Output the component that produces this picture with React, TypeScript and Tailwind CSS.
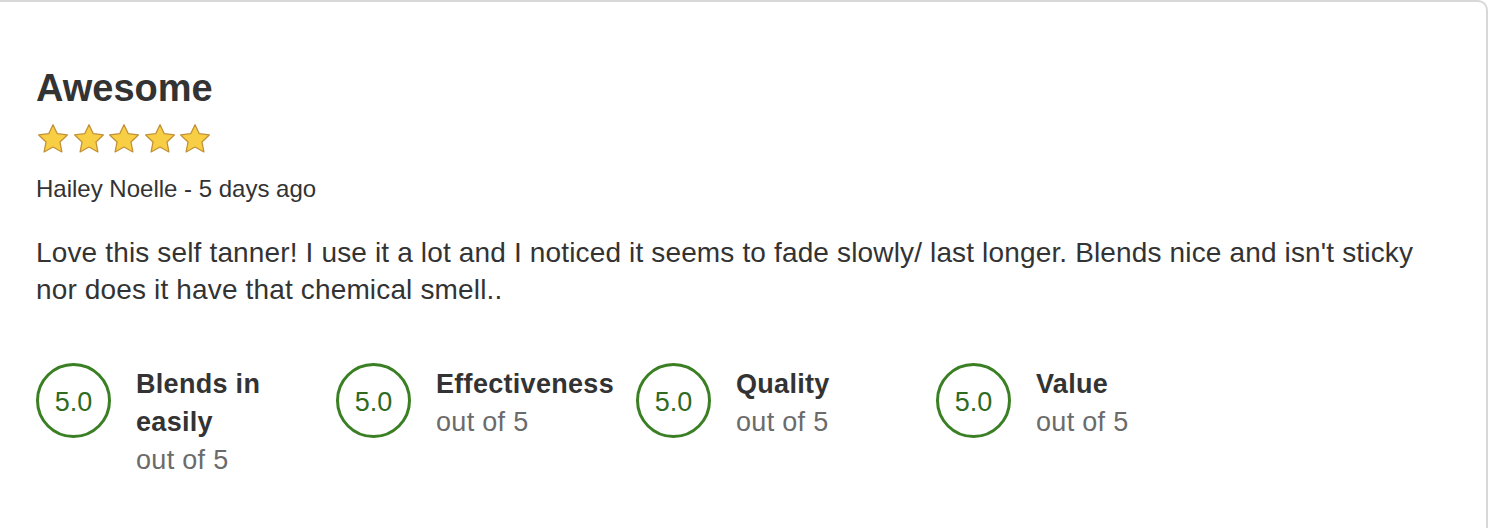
const ratings = [
  { label: 'Blends in easily', score: '5.0' },
  { label: 'Effectiveness', score: '5.0' },
  { label: 'Quality', score: '5.0' },
  { label: 'Value', score: '5.0' },
];

function Star() {
  return (
    <svg width="34" height="32" viewBox="0 0 24 23" className="shrink-0">
      <polygon
        points="12,1.2 15.1,7.7 22.3,8.6 17,13.6 18.4,20.8 12,17.3 5.6,20.8 7,13.6 1.7,8.6 8.9,7.7"
        fill="#f8cf44"
        stroke="#c38f35"
        strokeWidth="0.9"
        strokeLinejoin="round"
      />
    </svg>
  );
}

export default function App() {
  return (
    <div className="min-h-screen bg-white font-['Liberation_Sans',Arial,sans-serif]">
      <div className="w-[1488px] min-h-[560px] border-t-2 border-r-2 border-[#d8d8d8] rounded-tr-[10px] pl-[36px] pr-[40px] pt-[67px]">
        {/* Title + stars */}
        <h2 className="text-[38px] leading-none font-bold text-[#333333]">Awesome</h2>
        <div className="mt-[16px] flex gap-[1.5px]">
          {[0, 1, 2, 3, 4].map((i) => (
            <Star key={i} />
          ))}
        </div>
        <p className="mt-[22px] text-[24px] leading-none text-[#333333]">Hailey Noelle - 5 days ago</p>

        {/* Review body */}
        <p className="mt-[33px] text-[28px] leading-[37px] tracking-[0.15px] text-[#333333]">
          Love this self tanner! I use it a lot and I noticed it seems to fade slowly/ last longer. Blends nice and isn't sticky nor does it have that chemical smell..
        </p>

        {/* Rating breakdown */}
        <div className="mt-[55px] flex">
          {ratings.map(({ label, score }) => (
            <div key={label} className="w-[300px] flex gap-[25px]">
              <div className="h-[75px] w-[75px] shrink-0 rounded-full border-[3px] border-[#3a7f23] flex items-center justify-center pt-[4px] text-[27px] text-[#2f6b1f]">
                {score}
              </div>
              <div className="w-[185px] pt-[2px] text-[27px] leading-[38px] tracking-[0.3px]">
                <p className="font-bold text-[#333333]">{label}</p>
                <p className="text-[#6b6b6b]">out of 5</p>
              </div>
            </div>
          ))}
        </div>
      </div>
    </div>
  );
}
